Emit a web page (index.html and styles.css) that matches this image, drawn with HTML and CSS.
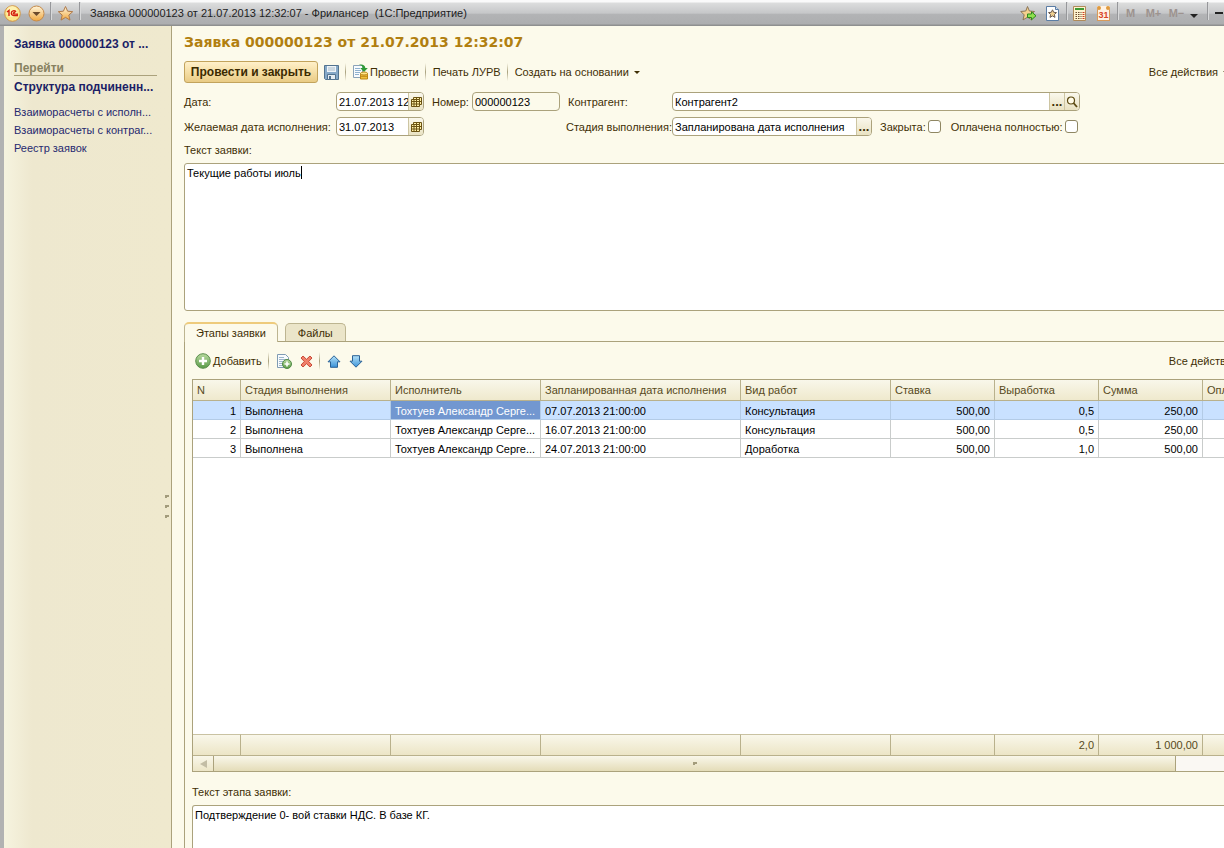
FILE: index.html
```html
<!DOCTYPE html>
<html lang="ru">
<head>
<meta charset="utf-8">
<title>Заявка 000000123 от 21.07.2013 12:32:07 - Фрилансер</title>
<link rel="stylesheet" href="styles.css">
</head>
<body>
<svg class="defs" width="0" height="0" aria-hidden="true">
  <defs>
    <linearGradient id="gold" x1="0" y1="0" x2="0" y2="1"><stop offset="0" stop-color="#fff6dc"/><stop offset="1" stop-color="#f0a840"/></linearGradient>
    <linearGradient id="blue" x1="0" y1="0" x2="0" y2="1"><stop offset="0" stop-color="#b5e2f8"/><stop offset="1" stop-color="#3a92d8"/></linearGradient>
    <linearGradient id="green" x1="0" y1="0" x2="0" y2="1"><stop offset="0" stop-color="#b9dba0"/><stop offset="1" stop-color="#5a9a48"/></linearGradient>
    <symbol id="i-cal" viewBox="0 0 12 12"><path d="M3.500 1.500h8v7h-2v2h-8v-7h2z" fill="#fff0a8"/><path d="M3.500 1.500h8v7M1.500 3.500h8v7h-8zM1.500 5.500h8M1.500 8h8M4 3.500v7M6.500 1.500v9M9.500 1.500v2M9.500 5.500h2M9.500 8.500h2M3.500 1.500v2" stroke="#6b5313" fill="none"/></symbol>
  </defs>
</svg>
<div class="app">
  <header class="titlebar">
    <button class="tb-btn logo" aria-label="Меню 1С">
      <svg width="17" height="17" viewBox="0 0 17 17"><circle cx="8.500" cy="8.500" r="7.800" fill="#fbe58a" stroke="#d39545"/><circle cx="8" cy="6.500" r="5.500" fill="#fff7c0" opacity=".7"/><path d="M3 7l2-1.500V11M12 6.800C10.500 5 7.300 5.700 7.300 8.200S9.500 10.800 14 10.500M11 8c-1-1-2 0-1.500.8.500.5 2 .3 4.500.3" fill="none" stroke="#d3200f" stroke-width="1.400"/></svg>
    </button>
    <button class="tb-btn" aria-label="Главное меню">
      <svg width="17" height="17" viewBox="0 0 17 17"><circle cx="8.500" cy="8.500" r="7.500" fill="url(#gold)" stroke="#c58a4a"/><path d="M4.500 7h8l-4 4z" fill="#6b4a2c"/></svg>
    </button>
    <span class="tb-sep"></span>
    <button class="tb-btn" aria-label="Избранное">
      <svg width="17" height="17" viewBox="0 0 17 17"><path d="M8.500 1.500l2.100 4.700 5.100.5-3.900 3.400 1.200 5-4.500-2.700-4.500 2.700 1.200-5L1.300 6.700l5.100-.5z" fill="url(#gold)" stroke="#b07a4a"/></svg>
    </button>
    <span class="tb-sep"></span>
    <span class="tb-title">Заявка 000000123 от 21.07.2013 12:32:07 - Фрилансер&nbsp; (1С:Предприятие)</span>
    <div class="tb-tools">
      <button class="tb-btn" aria-label="Добавить в избранное">
        <svg width="17" height="17" viewBox="0 0 17 17"><path d="M7.500 1.500l1.900 4.500 5.100.5-3.900 3.400 1.200 5-4.300-2.700-4.500 2.700 1.200-5L.8 6.500l5-.5z" fill="#f3d08e" stroke="#8d7657"/><path d="M7.500 9h4V6.800l4.500 4-4.500 4v-2.300h-4z" fill="#8fe04e" stroke="#2c8a1c"/></svg>
      </button>
      <button class="tb-btn" aria-label="Перейти по ссылке">
        <svg width="13" height="15" viewBox="0 0 13 15"><path d="M.5.5h9l3 3v11H.5z" fill="#fff" stroke="#5b7da5"/><path d="M9.500.5v3h3" fill="#cfe0f2" stroke="#5b7da5"/><path d="M6.500 3.800l1.200 2.500 2.800.3-2.100 1.900.6 2.900-2.500-1.500L4 11.400l.6-2.900-2.100-1.900 2.800-.3z" fill="#f0d090" stroke="#6b5a50"/></svg>
      </button>
      <span class="tb-sep"></span>
      <button class="tb-btn" aria-label="Калькулятор">
        <svg width="13" height="15" viewBox="0 0 13 15"><path d="M.5.5h12v14H.5z" fill="#fff3cf" stroke="#b08a5a"/><path d="M2 2h9v2H2z" fill="#3f9a34"/><path d="M2.500 6.500h6M2.500 8.500h6M2.500 10.500h6M2.500 12.500h6" stroke="#6a4a30" stroke-dasharray="1.500 1"/><path d="M9.500 6.500h2M9.500 8.500h2M9.500 10.500h2M9.500 12.500h2" stroke="#d03a20"/></svg>
      </button>
      <button class="tb-btn cal31" aria-label="Календарь"><span>31</span></button>
      <span class="tb-sep near"></span>
      <button class="tb-mem">M</button>
      <button class="tb-mem">M+</button>
      <button class="tb-mem">M−</button>
      <button class="tb-more" aria-label="Ещё"><span class="arrow"></span></button>
      <span class="tb-sep"></span>
      <button class="tb-min" aria-label="Свернуть"></button>
    </div>
  </header>

  <div class="body">
    <nav class="side">
      <a class="side-link strong" href="#">Заявка 000000123 от ...</a>
      <h2 class="side-head">Перейти</h2>
      <a class="side-link strong" href="#">Структура подчиненн...</a>
      <div class="side-list">
        <a class="side-link" href="#">Взаиморасчеты с исполн...</a>
        <a class="side-link" href="#">Взаиморасчеты с контраг...</a>
        <a class="side-link" href="#">Реестр заявок</a>
      </div>
      <div class="grip"><i></i><i></i><i></i></div>
    </nav>

    <main class="main">
      <h1 class="title">Заявка 000000123 от 21.07.2013 12:32:07</h1>
      <div class="bar">
        <button class="primary">Провести и закрыть</button>
        <button class="flat save" aria-label="Записать">
          <svg width="15" height="15" viewBox="0 0 15 15"><path d="M.5.500h14v14H1.500l-1-1z" fill="#86a9c8" stroke="#52738f"/><path d="M3 1h9v6H3z" fill="#eef4f8"/><path d="M4 3h7M4 5h7" stroke="#a9bccb"/><path d="M3.500 9.500h8v5h-8z" fill="#e6edf2" stroke="#52738f"/><path d="M5 11h2v3H5z" fill="#52738f"/></svg>
        </button>
        <span class="sep"></span>
        <button class="flat post">
          <svg width="16" height="16" viewBox="0 0 16 16"><path d="M.5 1.500h9v12h-9z" fill="#f8fbfd" stroke="#8ba3b8"/><path d="M2 4.500h5M2 6.500h6M2 8.500h5M2 10.500h4" stroke="#8fb1cf"/><path d="M6 .8c3-1 6.300.2 6.300 3.200h2.500L11 8 7.200 4h2.600C9.800 2.500 8.500 1.300 6 .8z" fill="#2f9a35"/><path d="M7.500 9.500h7v5.500h-7z" fill="#efc03c" stroke="#bd8618"/><ellipse cx="11" cy="9.500" rx="3.500" ry="1.500" fill="#ffe68a" stroke="#bd8618"/><path d="M7.500 12.300h7" stroke="#bd8618"/></svg>
          Провести
        </button>
        <span class="sep"></span>
        <button class="flat">Печать ЛУРВ</button>
        <span class="sep"></span>
        <button class="flat">Создать на основании <span class="arrow"></span></button>
        <button class="flat all">Все действия <span class="arrow"></span></button>
      </div>

      <form class="form">
        <label for="date">Дата:</label>
        <div class="field"><input id="date" value="21.07.2013 12:32:07"><button type="button" aria-label="Выбрать дату"><svg width="12" height="12"><use href="#i-cal"/></svg></button></div>
        <label class="in" for="num">Номер:</label>
        <div class="field pale"><input id="num" value="000000123"></div>
        <label class="in" for="agent">Контрагент:</label>
        <div class="field"><input id="agent" value="Контрагент2"><button type="button" class="dots" aria-label="Выбрать">...</button><button type="button" aria-label="Открыть"><svg width="12" height="12" viewBox="0 0 12 12"><circle cx="5" cy="4.500" r="3.500" fill="#fffbe8" stroke="#5c4a12" stroke-width="1.200"/><path d="M7.500 7l3.500 4" stroke="#5c4a12" stroke-width="1.800"/></svg></button></div>

        <label for="want">Желаемая дата исполнения:</label>
        <div class="field"><input id="want" value="31.07.2013"><button type="button" aria-label="Выбрать дату"><svg width="12" height="12"><use href="#i-cal"/></svg></button></div>
        <label class="in stage" for="stage">Стадия выполнения:</label>
        <div class="multi">
          <div class="field stagefield"><input id="stage" value="Запланирована дата исполнения"><button type="button" class="dots" aria-label="Выбрать">...</button></div>
          <label class="check">Закрыта:<input type="checkbox"></label>
          <label class="check">Оплачена полностью:<input type="checkbox"></label>
        </div>
      </form>

      <label class="caption" for="req">Текст заявки:</label>
      <div class="textwrap">
        <textarea id="req" class="area req">Текущие работы июль</textarea>
        <span class="caret"></span>
      </div>

      <div class="tabs">
        <button class="tab active">Этапы заявки</button>
        <button class="tab">Файлы</button>
      </div>
      <section class="panel">
        <div class="bar gridbar">
          <button class="flat add">
            <svg width="16" height="16" viewBox="0 0 16 16"><circle cx="8" cy="8" r="7.300" fill="url(#green)" stroke="#5b8f4d"/><path d="M8 4v8M4 8h8" stroke="#fff" stroke-width="2.400"/></svg>
            Добавить
          </button>
          <span class="sep"></span>
          <button class="flat" aria-label="Скопировать"><svg width="16" height="16" viewBox="0 0 16 16"><path d="M1.500 1.500h8l3 3v10h-11z" fill="#f8fbfd" stroke="#7f9bb3"/><path d="M3 4.500h5M3 6.500h7M3 8.500h5M3 10.500h4M3 12.500h4" stroke="#9db6cc"/><circle cx="11" cy="11" r="4.500" fill="url(#green)" stroke="#4f8a45"/><path d="M11 8.500v5M8.500 11h5" stroke="#fff" stroke-width="1.600"/></svg></button>
          <button class="flat" aria-label="Удалить"><svg width="13" height="13" viewBox="0 0 13 13"><path d="M3 1l3.500 3.300L10 1l2 2-3.300 3.500L12 10l-2 2-3.500-3.300L3 12l-2-2 3.300-3.500L1 3z" fill="#f0806a" stroke="#c94a38"/></svg></button>
          <span class="sep"></span>
          <button class="flat" aria-label="Вверх"><svg width="14" height="13" viewBox="0 0 14 13"><path d="M7 .8l6 6h-2.500v5.500h-7V6.800H1z" fill="url(#blue)" stroke="#2b6296"/></svg></button>
          <button class="flat down" aria-label="Вниз"><svg width="14" height="13" viewBox="0 0 14 13"><path d="M7 12.200l6-6h-2.500V.7h-7v5.500H1z" fill="url(#blue)" stroke="#2b6296"/></svg></button>
          <button class="flat all">Все действия <span class="arrow"></span></button>
        </div>

        <div class="grid">
          <div class="rows">
            <table>
              <colgroup><col class="c-n"><col class="c-m"><col class="c-m"><col class="c-l"><col class="c-m"><col class="c-s"><col class="c-s"><col class="c-s"><col></colgroup>
              <thead><tr><th>N</th><th>Стадия выполнения</th><th>Исполнитель</th><th>Запланированная дата исполнения</th><th>Вид работ</th><th>Ставка</th><th>Выработка</th><th>Сумма</th><th>Опл</th></tr></thead>
              <tbody>
                <tr class="sel"><td class="r">1</td><td>Выполнена</td><td class="cur">Тохтуев Александр Серге...</td><td>07.07.2013 21:00:00</td><td>Консультация</td><td class="r">500,00</td><td class="r">0,5</td><td class="r">250,00</td><td></td></tr>
                <tr><td class="r">2</td><td>Выполнена</td><td>Тохтуев Александр Серге...</td><td>16.07.2013 21:00:00</td><td>Консультация</td><td class="r">500,00</td><td class="r">0,5</td><td class="r">250,00</td><td></td></tr>
                <tr><td class="r">3</td><td>Выполнена</td><td>Тохтуев Александр Серге...</td><td>24.07.2013 21:00:00</td><td>Доработка</td><td class="r">500,00</td><td class="r">1,0</td><td class="r">500,00</td><td></td></tr>
              </tbody>
            </table>
          </div>
          <table class="totals">
            <colgroup><col class="c-n"><col class="c-m"><col class="c-m"><col class="c-l"><col class="c-m"><col class="c-s"><col class="c-s"><col class="c-s"><col></colgroup>
            <tbody><tr><td></td><td></td><td></td><td></td><td></td><td></td><td class="r">2,0</td><td class="r">1 000,00</td><td></td></tr></tbody>
          </table>
          <div class="hscroll">
            <button class="hs-left" aria-label="Влево"></button>
            <div class="hs-thumb"><i></i></div>
            <div class="hs-track"></div>
          </div>
        </div>

        <label class="caption" for="stagetext">Текст этапа заявки:</label>
        <textarea id="stagetext" class="area foot">Подтверждение 0- вой ставки НДС. В базе КГ.</textarea>
      </section>
    </main>
  </div>
</div>
</body>
</html>
```

FILE: styles.css
```css
* { box-sizing: border-box; }
html, body { height: 100%; margin: 0; overflow: hidden; }
body {
  font: 11px/16px "Liberation Sans", Arial, sans-serif;
  color: #3f2f05;
  background: #fcfaeb;
}
button, input, textarea { font: inherit; color: inherit; margin: 0; padding: 0; border: 0; background: none; }
svg { display: block; flex: none; }
.defs { position: absolute; }
/* The form is a little wider than the window and runs off its right edge */
.app { display: flex; flex-direction: column; height: 100vh; width: calc(100% + 32px); }

.titlebar {
  display: flex; align-items: center; flex: none; height: 26px; padding-left: 3px;
  background: linear-gradient(#fafafa 0, #fafafa 2px, #dcdddd 3px, #c6c7c9 50%, #b2b3b5 56%, #adaeb0 24px, #8f9090 25px);
}
.tb-btn { display: flex; width: 18px; justify-content: center; }
.tb-btn + .tb-btn { margin-left: 6px; }
.tb-sep { width: 1px; height: 18px; margin: 0 5px 4px; background: #96979a; box-shadow: 1px 0 #d8d9da; }
.tb-title { margin-left: 5px; color: #1c1c1c; }
.tb-title, .tb-tools { white-space: nowrap; }
.tb-tools { display: flex; align-items: center; margin-left: auto; padding-right: 33px; }
.tb-tools .cal31 { flex: none; width: 13px; height: 15px; margin-left: 9px; border: 1px solid #d89a5a; border-top: 4px dotted #e09a3c; background: #fff2e4; }
.cal31 span { font-size: 9px; line-height: 10px; font-weight: bold; color: #d8442a; }
.tb-tools .tb-sep:nth-of-type(1) { margin-right: 3px; }
.tb-tools .near { margin-left: 7px; margin-right: 1px; }
.tb-mem { width: 23px; font-weight: bold; color: #9d938f; }
.tb-more { width: 14px; padding: 6px 0 0 2px; }
.arrow { display: inline-block; border: 3px solid transparent; border-top-color: currentColor; border-bottom: 0; margin-left: 2px; vertical-align: 2px; }
.tb-more .arrow { display: block; width: 8px; margin: 0; border-width: 4px 4px 0; color: #222; }
.tb-min { width: 8px; height: 2px; margin-left: 2px; background: #222; }

.body { display: flex; flex: 1; min-height: 0; border-left: 4px solid #b2b2b2; }
.side {
  position: relative; flex: none; width: 168px; padding: 10px 14px 0 10px;
  border-right: 1px solid #aba27c;
  background: linear-gradient(90deg, #f6f3df, #eee8cf 28px, #efe9ce);
}
.side-link { display: block; line-height: 18px; color: #26296f; text-decoration: none; white-space: nowrap; }
.strong { font-weight: bold; font-size: 12px; line-height: 16px; color: #1c1f66; }
.side-head { margin: 9px 0 3px; font-size: 12px; line-height: 14px; color: #87815f; border-bottom: 1px solid #aba27c; }
.side-list { padding-top: 8px; }
.grip { position: absolute; right: 2px; top: 469px; display: grid; gap: 7px; }
.grip i { width: 4px; height: 3px; border: solid #a39c7c; border-width: 2px 0 0 2px; }

.main { display: flex; flex-direction: column; flex: 1; min-width: 0; padding-left: 12px; background: #fcfaeb; }
.title { margin: 6px 0 9px; font: bold 14px/20px "DejaVu Sans", Verdana, sans-serif; color: #b17f10; }
.bar { display: flex; align-items: center; height: 22px; white-space: nowrap; }
.primary {
  height: 22px; width: 134px; font-size: 12px; font-weight: bold; color: #3b2a00;
  border: 1px solid #c2a35c; border-radius: 3px; background: linear-gradient(#fff0c9, #f5dfa6 50%, #e9cb85);
}
.flat { display: flex; align-items: center; gap: 3px; }
.post { gap: 1px; }
.save { margin: 0 6px; }
.sep { width: 1px; height: 18px; background: linear-gradient(#fcfaeb, #a9a17e, #fcfaeb); }
.sep + .flat { margin-left: 7px; }
.flat + .sep { margin-left: 6px; }
.save + .sep { margin-left: 0; }
.bar .all { margin-left: auto; padding-right: 27px; }

.form { display: grid; grid-template-columns: 152px 88px 48px 88px 112px 408px; grid-auto-rows: 19px; row-gap: 6px; align-items: center; margin-top: 9px; white-space: nowrap; }
.in { padding-left: 8px; }
.stage { grid-column: 5; padding-left: 6px; }
.field { display: flex; height: 19px; border: 1px solid #aba27c; border-radius: 4px; background: #fff; overflow: hidden; }
.field input { flex: 1; min-width: 0; padding-left: 2px; color: #000; outline: 0; }
.field button { display: flex; align-items: center; justify-content: center; width: 15px; border-left: 1px solid #cdc5a2; background: linear-gradient(#faf8ec, #e9e2c2); }
.field .dots { font-weight: bold; font-size: 13px; }
.pale { background: #fcfaeb; }
.multi { display: flex; align-items: center; }
.stagefield { width: 200px; }
.check { display: flex; align-items: center; gap: 2px; margin-left: 8px; }
.check + .check { margin-left: 10px; }
.check input { appearance: none; width: 13px; height: 13px; border: 1px solid #8f8763; border-radius: 3px; background: #fff; }

.caption { display: block; margin: 6px 0 5px; line-height: 16px; }
.textwrap { position: relative; height: 148px; flex: none; }
.area { display: block; width: 100%; padding: 1px 2px; color: #000; background: #fff; border: 1px solid #aba27c; border-radius: 3px; resize: none; outline: 0; }
.req { height: 100%; }
.caret { position: absolute; left: 117px; top: 3px; width: 1px; height: 13px; background: #000; }

.tabs { display: flex; gap: 7px; align-items: flex-end; height: 19px; margin-top: 11px; flex: none; }
.tab { height: 18px; padding: 0 12px; border: 1px solid #bdb591; border-bottom: 0; border-radius: 5px 5px 0 0; background: #ebe5c9; }
.tab.active { position: relative; height: 20px; padding: 0 11px; border-top: 2px solid #eecb7c; margin-bottom: -1px; background: #fcfaeb; }
.panel { display: flex; flex-direction: column; flex: 1; min-height: 0; padding: 8px 0 0 7px; border: solid #aba27c; border-width: 1px 0 0 1px; }
.gridbar { flex: none; padding-left: 3px; margin-bottom: 7px; }
.gridbar .add { gap: 2px; }
.gridbar .flat + .flat { margin-left: 8px; }
.gridbar .all { padding-right: 7px; }
.gridbar .flat.all { margin-left: auto; }

.grid { display: flex; flex-direction: column; flex: 1; min-height: 0; border: 1px solid #aba27c; background: #fff; }
.rows { flex: 1; min-height: 0; }
table { width: 100%; table-layout: fixed; border-collapse: separate; border-spacing: 0; color: #000; white-space: nowrap; }
.c-n { width: 48px; }
.c-m { width: 150px; }
.c-l { width: 200px; }
.c-s { width: 104px; }
th, td { overflow: hidden; padding: 0 4px; text-align: left; font-weight: normal; border-right: 1px solid #c9cccb; border-bottom: 1px solid #c9cccb; }
th { height: 21px; color: #574a1c; background: linear-gradient(#f9f7ea, #efe9cd); border-color: #b9b18c; }
td { height: 19px; padding-top: 1px; }
.r { text-align: right; }
.sel td { background: #c9e1ff; border-color: #b3cbe6; }
.sel .cur { color: #fff; background: #7297d0; }
.totals { flex: none; }
.totals td { height: 22px; padding-top: 0; color: #574a1c; background: linear-gradient(#f9f7ea, #ece5c6); border-color: #b9b18c; border-top: 1px solid #c9c2a2; }
.hscroll { display: flex; height: 15px; flex: none; }
.hs-left { display: flex; align-items: center; justify-content: center; width: 21px; border-right: 1px solid #aba27c; background: linear-gradient(#f9f7ea, #ece5c6); }
.hs-left::before { content: ""; border: 4px solid transparent; border-right: 7px solid #c3bda5; border-left: 0; }
.hs-thumb { display: flex; align-items: center; justify-content: center; flex: 1; border-right: 1px solid #aba27c; background: linear-gradient(#f9f7ea, #e4dcb8); }
.hs-thumb i { width: 4px; height: 3px; border: solid #a39c7c; border-width: 2px 0 0 2px; }
.hs-track { width: 79px; background: #faf8f3; }
.panel .caption { margin: 12px 0 5px; }
.foot { height: 43px; flex: none; border-bottom: 0; border-bottom-left-radius: 0; }
```
